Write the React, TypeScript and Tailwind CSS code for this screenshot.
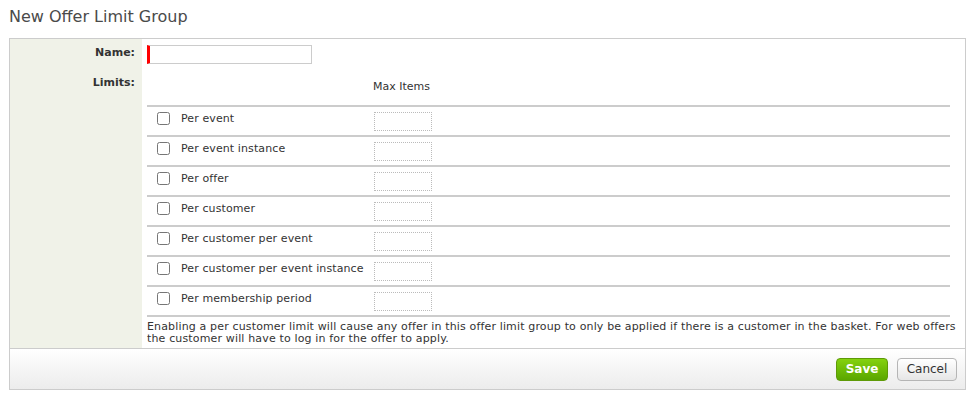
import React from "react";

const rows = [
  "Per event",
  "Per event instance",
  "Per offer",
  "Per customer",
  "Per customer per event",
  "Per customer per event instance",
  "Per membership period",
];

export default function App() {
  return (
    <div
      className="w-[972px] h-[400px] bg-white text-[#333] pl-[9px]"
      style={{ fontFamily: '"DejaVu Sans", Verdana, sans-serif' }}
    >
      <div className="h-[38px] pt-[7px] text-[16px] leading-[20px] text-[#4a4a4a]">
        New Offer Limit Group
      </div>
      <div className="w-[957px] border border-[#cccccc]">
        <div className="grid grid-cols-[132px_1fr]">
          <div className="bg-[#f0f2e8] text-right pr-[7px] pt-[7px] text-[11px] leading-[13px] font-bold text-[#333] h-[33px]">
            Name:
          </div>
          <div className="pl-[5px] pt-[6px]">
            <input
              type="text"
              className="block w-[165px] h-[19px] border border-[#cccccc] border-l-[3px] border-l-[#ff0000] outline-none"
            />
          </div>
          <div className="bg-[#f0f2e8] text-right pr-[7px] pt-[4px] text-[11px] leading-[13px] font-bold text-[#333]">
            Limits:
          </div>
          <div className="pl-[5px] pr-[15px]">
            <div className="h-[33px] flex items-end pb-[12px] text-[11px] leading-[13px]">
              <div className="w-[226px]" />
              <div>Max Items</div>
            </div>
            <div className="border-b-2 border-[#cccccc]">
              {rows.map((r) => (
                <div
                  key={r}
                  className="h-[30px] border-t-2 border-[#cccccc] flex items-center text-[11px] leading-[13px]"
                >
                  <div className="w-[227px] flex items-center pl-[7px]">
                    <input type="checkbox" className="m-[3px] -mt-[2px] w-[13px] h-[13px]" />
                    <span className="ml-[8px] -mt-[6px] tracking-[0.1px]">{r}</span>
                  </div>
                  <div className="w-[58px] h-[19px] border border-dotted border-[#bbbbbb]" />
                </div>
              ))}
            </div>
            <div className="-mr-[10px] pt-[4px] pb-[3px] text-[11px] leading-[12px] tracking-[0.15px] text-[#333]">
              Enabling a per customer limit will cause any offer in this offer limit group to only be applied if there is a customer in the basket. For web offers the customer will have to log in for the offer to apply.
            </div>
          </div>
        </div>
        <div className="h-[41px] border-t border-[#cccccc] bg-gradient-to-b from-white to-[#ececec] flex items-center justify-end gap-[9px] pr-[8px]">
          <button className="w-[52px] h-[23px] rounded-[4px] border border-[#5e9a07] bg-gradient-to-b from-[#84d20f] to-[#5aa600] text-white font-bold text-[12px]">
            Save
          </button>
          <button className="w-[60px] h-[23px] rounded-[4px] border border-[#b5b5b5] bg-gradient-to-b from-white to-[#e6e6e6] text-[#333] text-[12px]">
            Cancel
          </button>
        </div>
      </div>
    </div>
  );
}
